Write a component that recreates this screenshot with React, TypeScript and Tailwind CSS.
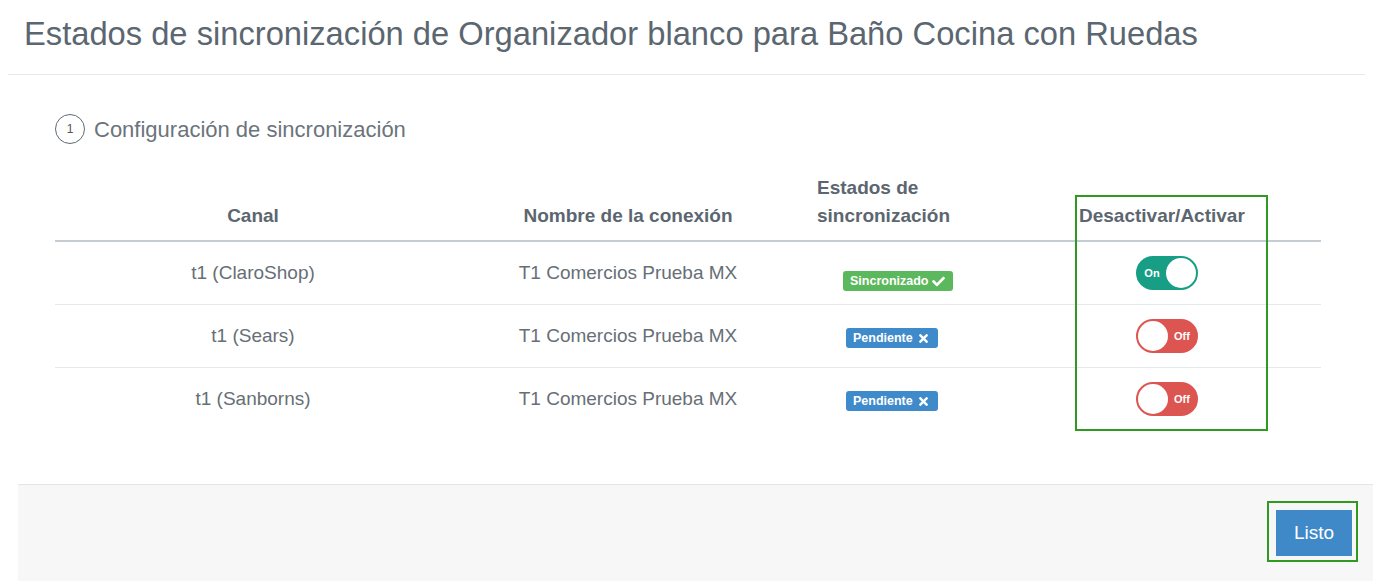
import React from 'react';
import { FaCheck, FaTimes } from 'react-icons/fa';

type Row = {
  canal: string;
  conexion: string;
  synced: boolean;
};

const ROWS: Row[] = [
  { canal: 't1 (ClaroShop)', conexion: 'T1 Comercios Prueba MX', synced: true },
  { canal: 't1 (Sears)', conexion: 'T1 Comercios Prueba MX', synced: false },
  { canal: 't1 (Sanborns)', conexion: 'T1 Comercios Prueba MX', synced: false },
];

const Toggle: React.FC<{ on: boolean }> = ({ on }) => (
  <div
    className={`flex h-[34px] w-[62px] items-center rounded-full border-2 ${
      on ? 'flex-row border-[#179e84] bg-[#179e84]' : 'flex-row-reverse border-[#dc5550] bg-[#dc5550]'
    }`}
  >
    <span className="flex-1 text-center text-[11px] font-bold text-white">{on ? 'On' : 'Off'}</span>
    <span className="h-[30px] w-[30px] rounded-full bg-white" />
  </div>
);

const Badge: React.FC<{ synced: boolean }> = ({ synced }) =>
  synced ? (
    <span className="inline-flex h-[20px] items-center gap-[4px] rounded-[3px] bg-[#5cb85c] pl-[7px] pr-[8px] text-[12.5px] font-bold text-white">
      Sincronizado <FaCheck className="text-[13px]" />
    </span>
  ) : (
    <span className="inline-flex h-[20px] items-center gap-[4px] rounded-[3px] bg-[#3f8acb] pl-[7px] pr-[8px] text-[12.5px] font-bold text-white">
      Pendiente <FaTimes className="text-[13px]" />
    </span>
  );

const App: React.FC = () => {
  return (
    <div className="relative flex h-[581px] w-[1373px] flex-col overflow-hidden bg-white font-['Liberation_Sans',Arial,sans-serif]">
      <div className="mx-[8px] h-[75px] border-b border-[#e8e8e8] pl-[16px] pt-[14px]">
        <h1 className="text-[32.7px] leading-[40px] text-[#5a6670]">
          Estados de sincronización de Organizador blanco para Baño Cocina con Ruedas
        </h1>
      </div>

      <div className="pl-[55px] pr-[52px]">
        <div className="mt-[39px] flex h-[30px] items-center gap-[9px]">
          <div className="flex h-[30px] w-[30px] items-center justify-center rounded-full border-[1.5px] border-[#5f6a72] text-[12px] text-[#555]">
            1
          </div>
          <span className="text-[22px] text-[#6b747c]">Configuración de sincronización</span>
        </div>

        <div className="mt-[30px]">
          <div className="grid grid-cols-[396px_354px_262px_200px_1fr] items-end border-b-2 border-[#c5ccd2] pb-[10px] text-[19px] font-bold leading-[28px] text-[#5b6670]">
            <div className="text-center">Canal</div>
            <div className="text-center">Nombre de la conexión</div>
            <div className="px-[12px]">
              Estados de
              <br />
              sincronización
            </div>
            <div className="px-[12px]">Desactivar/Activar</div>
            <div />
          </div>

          {ROWS.map((row, i) => (
            <div
              key={row.canal}
              className={`grid h-[62px] grid-cols-[396px_354px_262px_200px_1fr] items-center text-[19px] text-[#676f76] ${
                i < ROWS.length - 1 ? 'box-content border-b border-[#e6e9eb]' : ''
              }`}
            >
              <div className="text-center">{row.canal}</div>
              <div className="text-center">{row.conexion}</div>
              <div className={row.synced ? 'mt-[12px] pl-[38px]' : 'pl-[41px]'}>
                <Badge synced={row.synced} />
              </div>
              <div className="flex justify-center">
                <Toggle on={row.synced} />
              </div>
              <div />
            </div>
          ))}
        </div>
      </div>

      <div className="ml-[18px] mt-auto flex h-[97px] justify-end border-t border-[#e5e5e5] bg-[#f7f7f7] pr-[21px] pt-[25px]">
        <button className="h-[46px] w-[76px] bg-[#3f89c9] text-[19px] text-white">Listo</button>
      </div>

      <div className="pointer-events-none absolute left-[1075px] top-[195px] h-[236px] w-[193px] border-2 border-[#2f9a22]" />
      <div className="pointer-events-none absolute left-[1267px] top-[501px] h-[61px] w-[91px] border-2 border-[#2f9a22]" />
    </div>
  );
};

export default App;
